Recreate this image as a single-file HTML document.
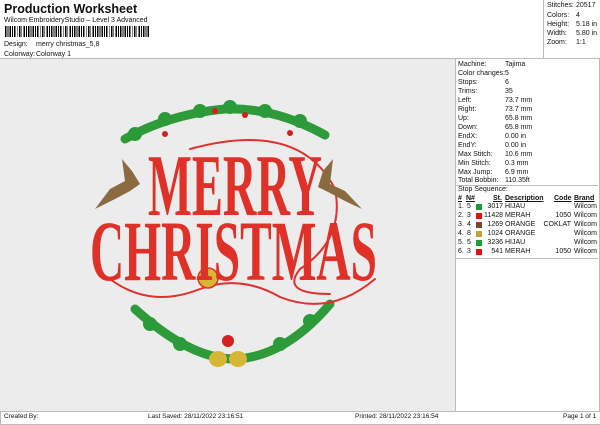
<!DOCTYPE html><html><head><style>
body{margin:0;width:600px;height:424px;background:#fff;font-family:"Liberation Sans",sans-serif;position:relative;overflow:hidden;color:#111}
.a{position:absolute;white-space:nowrap;font-size:7px;line-height:8px}
.r{position:absolute;left:458px;font-size:7px;line-height:8px;white-space:nowrap}
.v{position:absolute;left:505px}
</style></head><body>
<div class="a" style="left:4px;top:2px;font-size:12.5px;line-height:14px;font-weight:bold">Production Worksheet</div>
<div class="a" style="left:4px;top:17px">Wilcom EmbroideryStudio – Level 3 Advanced</div>
<div style="position:absolute;left:5px;top:26px;width:145px;height:11px;background:repeating-linear-gradient(90deg,#000 0 1.5px,#fff 1.5px 2.6px,#000 2.6px 3.4px,#fff 3.4px 4.6px)"></div>
<div class="a" style="left:4px;top:41px">Design:</div><div class="a" style="left:36px;top:41px">merry christmas_5,8</div>
<div class="a" style="left:4px;top:51px">Colorway:</div><div class="a" style="left:36px;top:51px">Colorway 1</div>
<div style="position:absolute;left:543px;top:0;width:56px;height:58px;border-left:1px solid #bbb;border-right:1px solid #bbb"></div>
<div class="a" style="left:547px;top:2px">Stitches:</div><div class="a" style="left:576px;top:2px">20517</div>
<div class="a" style="left:547px;top:12px">Colors:</div><div class="a" style="left:576px;top:12px">4</div>
<div class="a" style="left:547px;top:21px">Height:</div><div class="a" style="left:576px;top:21px">5.18 in</div>
<div class="a" style="left:547px;top:30px">Width:</div><div class="a" style="left:576px;top:30px">5.80 in</div>
<div class="a" style="left:547px;top:39px">Zoom:</div><div class="a" style="left:576px;top:39px">1:1</div>
<div style="position:absolute;left:0;top:58px;width:600px;border-top:1px solid #bbb"></div>
<div style="position:absolute;left:0;top:59px;width:455px;height:352px;background:#ececec"></div>
<div style="position:absolute;left:455px;top:59px;width:143px;height:352px;border-left:1px solid #bbb;border-right:1px solid #bbb"></div>
<div style="position:absolute;left:0;top:411px;width:599px;height:12px;border:1px solid #bbb"></div>
<div class="a" style="left:4px;top:413px;font-size:6.5px">Created By:</div>
<div class="a" style="left:148px;top:413px;font-size:6.5px">Last Saved: 28/11/2022 23:16:51</div>
<div class="a" style="left:355px;top:413px;font-size:6.5px">Printed: 28/11/2022 23:16:54</div>
<div class="a" style="left:563px;top:413px;font-size:6.5px">Page 1 of 1</div>
<div class="r" style="top:61px">Machine:<span class="v" style="left:47px">Tajima</span></div>
<div class="r" style="top:70px">Color changes:<span class="v" style="left:47px">5</span></div>
<div class="r" style="top:79px">Stops:<span class="v" style="left:47px">6</span></div>
<div class="r" style="top:88px">Trims:<span class="v" style="left:47px">35</span></div>
<div class="r" style="top:97px">Left:<span class="v" style="left:47px">73.7 mm</span></div>
<div class="r" style="top:106px">Right:<span class="v" style="left:47px">73.7 mm</span></div>
<div class="r" style="top:115px">Up:<span class="v" style="left:47px">65.8 mm</span></div>
<div class="r" style="top:124px">Down:<span class="v" style="left:47px">65.8 mm</span></div>
<div class="r" style="top:133px">EndX:<span class="v" style="left:47px">0.00 in</span></div>
<div class="r" style="top:142px">EndY:<span class="v" style="left:47px">0.00 in</span></div>
<div class="r" style="top:151px">Max Stitch:<span class="v" style="left:47px">10.6 mm</span></div>
<div class="r" style="top:160px">Min Stitch:<span class="v" style="left:47px">0.3 mm</span></div>
<div class="r" style="top:169px">Max Jump:<span class="v" style="left:47px">6.9 mm</span></div>
<div class="r" style="top:177px">Total Bobbin:<span class="v" style="left:47px">110.35ft</span></div>
<div style="position:absolute;left:456px;top:185px;width:142px;border-top:1px solid #bbb"></div>
<div class="r" style="top:186px">Stop Sequence:</div>
<div class="r" style="top:195px;font-weight:bold;text-decoration:underline">#</div>
<div class="r" style="top:195px;left:466px;font-weight:bold;text-decoration:underline">N#</div>
<div class="r" style="top:195px;left:493px;font-weight:bold;text-decoration:underline">St.</div>
<div class="r" style="top:195px;left:505px;font-weight:bold;text-decoration:underline">Description</div>
<div class="r" style="top:195px;left:554px;font-weight:bold;text-decoration:underline">Code</div>
<div class="r" style="top:195px;left:574px;font-weight:bold;text-decoration:underline">Brand</div>
<div id="rows"></div>
<div style="position:absolute;left:456px;top:258px;width:142px;border-top:1px solid #bbb"></div>
<script>
var d=[["1.","5","#1e9a3a","3017","HIJAU",""],["2.","3","#e8100f","11428","MERAH","1050"],["3.","4","#7a4a26","1269","ORANGE","COKLAT"],["4.","8","#c9a236","1024","ORANGE",""],["5.","5","#1e9a3a","3236","HIJAU",""],["6.","3","#e8100f","541","MERAH","1050"]];
var h="";d.forEach(function(r,i){var t=203+i*9;
h+='<div class="r" style="top:'+t+'px">'+r[0]+'</div><div class="r" style="top:'+t+'px;left:467px">'+r[1]+'</div>'+
'<div style="position:absolute;left:476px;top:'+(t+1)+'px;width:6px;height:6px;background:'+r[2]+'"></div>'+
'<div class="r" style="top:'+t+'px;left:484px;width:19px;text-align:right">'+r[3]+'</div>'+
'<div class="r" style="top:'+t+'px;left:505px">'+r[4]+'</div>'+
'<div class="r" style="top:'+t+'px;left:530px;width:41px;text-align:right">'+r[5]+'</div>'+
'<div class="r" style="top:'+t+'px;left:574px">Wilcom</div>';});
document.getElementById("rows").innerHTML=h;
</script>
<svg style="position:absolute;left:0;top:59px" width="455" height="352">
<g fill="none" stroke-linecap="round">
<path d="M125 80 Q170 55 225 50 Q275 48 325 76" stroke="#2f9a3a" stroke-width="9"/>
<path d="M135 250 Q190 300 235 300 Q285 298 330 245" stroke="#2f9a3a" stroke-width="9"/>
<path d="M190 90 Q300 60 335 130 Q345 180 300 210 Q280 235 330 235" stroke="#e23030" stroke-width="2"/>
<path d="M110 220 Q150 250 200 230 Q240 215 280 238 Q330 258 375 220" stroke="#e23030" stroke-width="2"/>
</g>
<g fill="#2b9a3a"><circle cx="135" cy="75" r="7"/><circle cx="165" cy="60" r="7"/><circle cx="200" cy="52" r="7"/><circle cx="230" cy="48" r="7"/><circle cx="265" cy="52" r="7"/><circle cx="300" cy="62" r="7"/><circle cx="150" cy="265" r="7"/><circle cx="180" cy="285" r="7"/><circle cx="280" cy="285" r="7"/><circle cx="310" cy="262" r="7"/></g>
<g fill="#d42020"><circle cx="215" cy="52" r="3"/><circle cx="245" cy="56" r="3"/><circle cx="165" cy="75" r="3"/><circle cx="290" cy="74" r="3"/><circle cx="228" cy="282" r="6"/></g>
<path d="M95 150 L110 130 L125 122 L122 100 L132 112 L140 125 L130 132 L115 140 Z" fill="#8b6a42"/>
<path d="M362 150 L345 132 L330 125 L333 100 L323 112 L318 128 L330 134 L345 142 Z" fill="#8b6a42"/>
<circle cx="208" cy="219" r="10" fill="#d6b735" stroke="#e23030" stroke-width="1.5"/>
<ellipse cx="218" cy="300" rx="9" ry="8" fill="#d6b735"/><ellipse cx="238" cy="300" rx="9" ry="8" fill="#d6b735"/>
<text x="148" y="156" textLength="174" lengthAdjust="spacingAndGlyphs" font-family="Liberation Serif,serif" font-weight="bold" font-size="88" fill="#e03128">MERRY</text>
<text x="90" y="221" textLength="287" lengthAdjust="spacingAndGlyphs" font-family="Liberation Serif,serif" font-weight="bold" font-size="86" fill="#e03128">CHRISTMAS</text>
</svg>
</body></html>
